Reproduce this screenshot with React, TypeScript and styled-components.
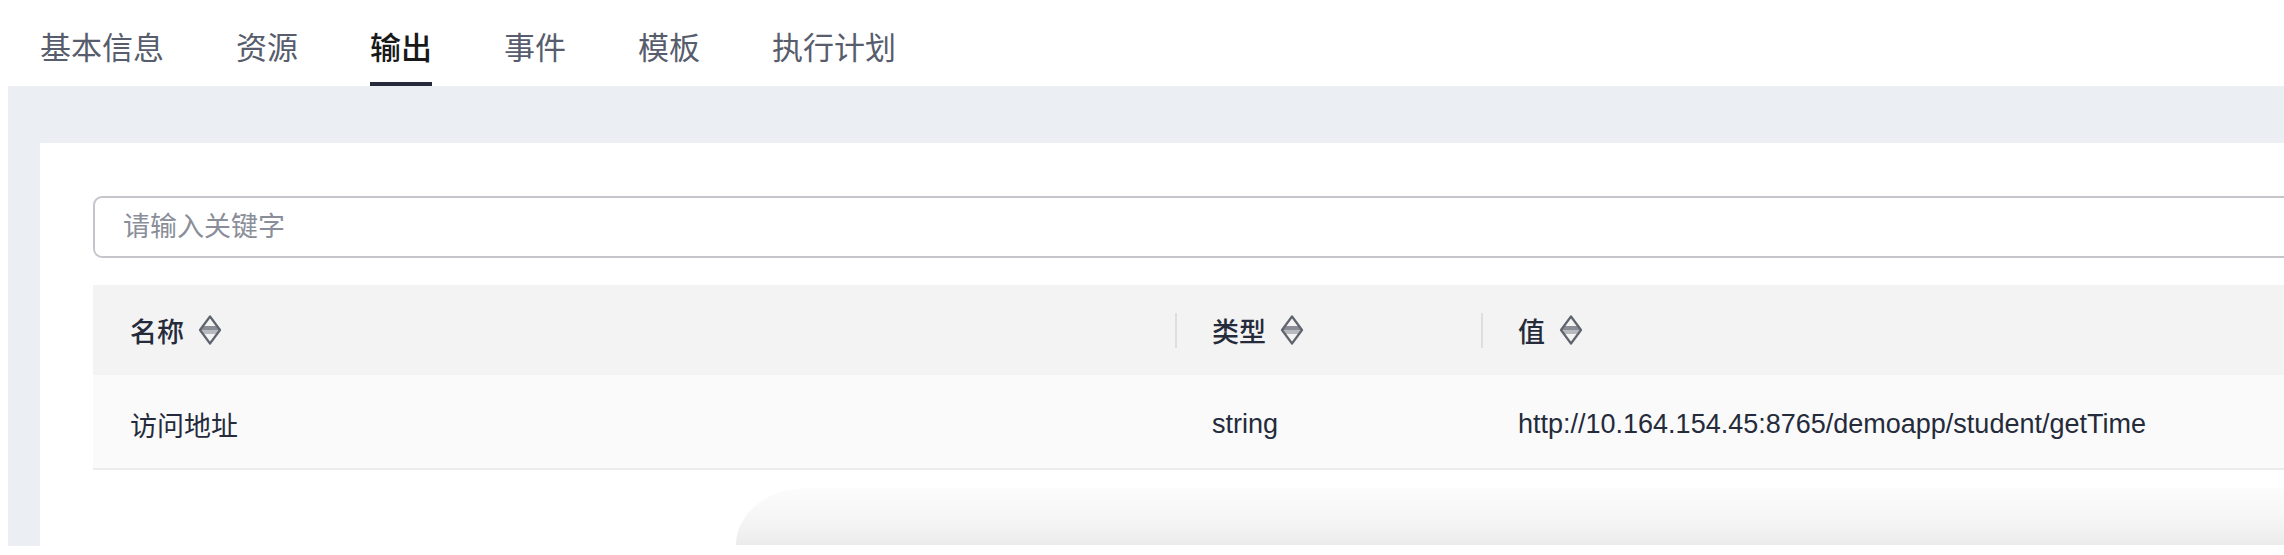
import React from 'react';
import styled, { createGlobalStyle } from 'styled-components';

const GlobalStyle = createGlobalStyle`
  html, body {
    margin: 0;
    padding: 0;
    background: #fff;
    overflow: hidden;
  }
  body {
    font-family: "Liberation Sans", "Noto Sans CJK SC", sans-serif;
  }
`;

const Page = styled.div`
  width: 2284px;
  height: 555px;
  overflow: hidden;
  background: #fff;
`;

const TabBar = styled.nav`
  display: flex;
  gap: 72px;
  height: 86px;
  padding-left: 40px;
  box-sizing: border-box;
`;

const Tab = styled.div<{ $active?: boolean }>`
  display: flex;
  align-items: center;
  box-sizing: border-box;
  padding-top: 8px;
  border-bottom: 4px solid ${(p) => (p.$active ? '#252b3a' : 'transparent')};
  font-size: 31px;
  color: ${(p) => (p.$active ? '#191919' : '#575d6c')};
  font-weight: ${(p) => (p.$active ? 500 : 400)};
  white-space: nowrap;
`;

const Workspace = styled.div`
  margin-left: 8px;
  height: 460px;
  padding: 57px 0 0 32px;
  box-sizing: border-box;
  background: #ebeff3;
  overflow: hidden;
`;

const Panel = styled.div`
  display: flex;
  flex-direction: column;
  width: 2400px;
  height: 100%;
  padding: 53px 0 0 53px;
  box-sizing: border-box;
  background: #fff;
`;

const Search = styled.input`
  height: 62px;
  box-sizing: border-box;
  border: 2px solid #c4c6cc;
  border-radius: 9px;
  padding: 0 28px;
  font-family: inherit;
  font-size: 27px;
  color: #252b3a;
  outline: none;
  background: #fff;

  &::placeholder {
    color: #8a8e99;
  }
`;

const Table = styled.div`
  margin-top: 27px;
  display: flex;
  flex-direction: column;
`;

const Row = styled.div<{ $head?: boolean }>`
  display: grid;
  grid-template-columns: 1082px 306px 1fr;
  height: ${(p) => (p.$head ? '90px' : '95px')};
  box-sizing: border-box;
  background: ${(p) => (p.$head ? '#f3f3f3' : '#fafafa')};
  border-bottom: ${(p) => (p.$head ? 'none' : '2px solid #ececec')};
  padding-top: ${(p) => (p.$head ? '0' : '6px')};
`;

const HeadCell = styled.div<{ $divider?: boolean }>`
  display: flex;
  align-items: center;
  padding-left: ${(p) => (p.$divider ? '0' : '37px')};
  font-size: 27px;
  font-weight: 500;
  color: #252b3a;

  &::before {
    content: '';
    display: ${(p) => (p.$divider ? 'block' : 'none')};
    width: 2px;
    height: 35px;
    margin-right: 35px;
    background: #dcdee2;
  }
`;

const SortIcon = styled.svg`
  margin-left: 14px;
  flex-shrink: 0;
`;

const Cell = styled.div`
  display: flex;
  align-items: center;
  padding-left: 37px;
  font-size: 27px;
  color: #252b3a;
  white-space: nowrap;
`;

const Shade = styled.div`
  margin-top: 18px;
  margin-left: 643px;
  height: 57px;
  border-top-left-radius: 70px 57px;
  background: linear-gradient(180deg, #fcfcfc 0%, #f7f7f7 45%, #ececec 100%);
`;

const Sort = () => (
  <SortIcon width="24" height="30" viewBox="0 0 24 30">
    <polygon points="5,11 19,11 22,15 2,15" fill="#8a8d95" />
    <polygon points="2,15 22,15 19,19 5,19" fill="#b8bac0" />
    <polygon
      points="12,1.5 22,15 12,28.5 2,15"
      fill="none"
      stroke="#5f636d"
      strokeWidth="2.2"
      strokeLinejoin="round"
    />
  </SortIcon>
);

const tabs = ['基本信息', '资源', '输出', '事件', '模板', '执行计划'];

export default function App() {
  return (
    <Page>
      <GlobalStyle />
      <TabBar>
        {tabs.map((t) => (
          <Tab key={t} $active={t === '输出'}>
            {t}
          </Tab>
        ))}
      </TabBar>
      <Workspace>
        <Panel>
          <Search placeholder="请输入关键字" readOnly />
          <Table>
            <Row $head>
              <HeadCell>
                名称
                <Sort />
              </HeadCell>
              <HeadCell $divider>
                类型
                <Sort />
              </HeadCell>
              <HeadCell $divider>
                值
                <Sort />
              </HeadCell>
            </Row>
            <Row>
              <Cell>访问地址</Cell>
              <Cell>string</Cell>
              <Cell>http://10.164.154.45:8765/demoapp/student/getTime</Cell>
            </Row>
          </Table>
          <Shade />
        </Panel>
      </Workspace>
    </Page>
  );
}
